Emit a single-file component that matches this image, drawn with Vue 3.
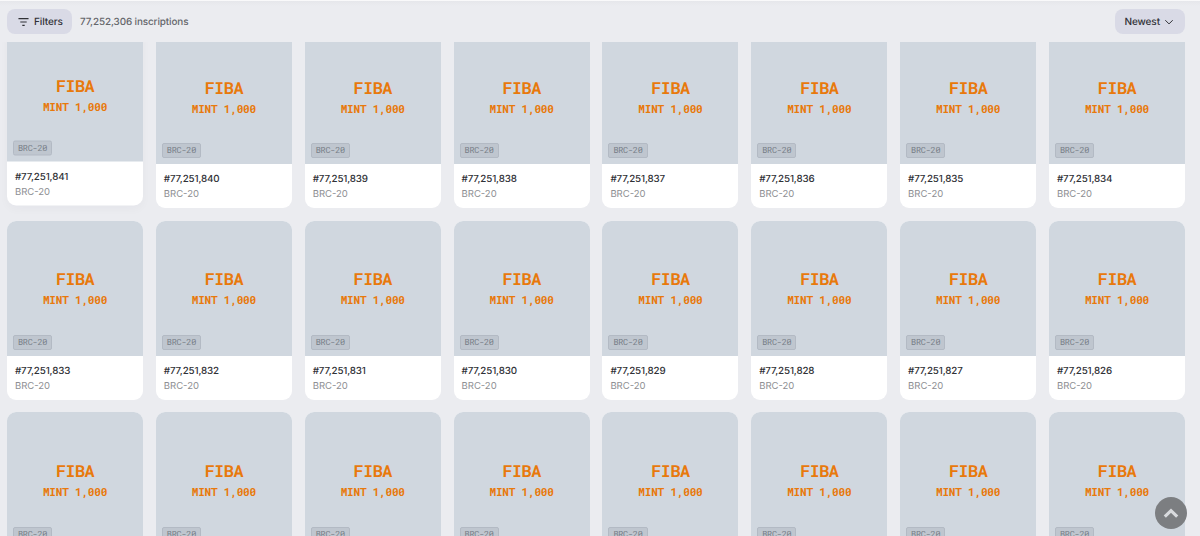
<template>
  <div class="page">
    <header class="toolbar">
      <div class="toolbar-left">
        <button class="filter-button">
          <svg class="filter-icon" viewBox="0 0 12 10" fill="none" stroke="currentColor" stroke-width="1.3">
            <path d="M0.5 1.4h11M2.5 5h7M4.7 8.6h2.6"></path>
          </svg>
          Filters
        </button>
        <span class="total">77,252,306 inscriptions</span>
      </div>
      <button class="sort-button">
        Newest
        <svg class="sort-icon" viewBox="0 0 10 10" fill="none" stroke="currentColor" stroke-width="1">
          <path d="M1.3 3.2L5 6.9L8.7 3.2"></path>
        </svg>
      </button>
    </header>

    <main class="results">
      <div class="card-grid">
        <article
          v-for="card in inscriptions"
          :key="card.number"
          class="card"
          :class="{ raised: card.raised }"
        >
          <div class="preview">
            <span class="ticker">FIBA</span>
            <span class="operation">MINT 1,000</span>
            <span class="badge">BRC-20</span>
          </div>
          <div class="card-info">
            <h3 class="card-number">#{{ card.number.toLocaleString('en-US') }}</h3>
            <p class="card-type">BRC-20</p>
          </div>
        </article>
      </div>
    </main>

    <button class="scroll-top" aria-label="Back to top" @click="scrollToTop">
      <svg width="16" height="12" viewBox="0 0 16 12" fill="none" stroke="currentColor" stroke-width="3.2">
        <path d="M1.8 9.6L8 3.7L14.2 9.6"></path>
      </svg>
    </button>
  </div>
</template>

<script setup>
import { ref } from 'vue'

const latest = 77251841

const inscriptions = ref(
  Array.from({ length: 24 }, (_, index) => ({
    number: latest - index,
    raised: index === 0
  }))
)

const scrollToTop = () => {
  window.scrollTo({ top: 0, behavior: 'smooth' })
}
</script>

<style>
body {
  margin: 0;
  background: #ebecf0;
}
</style>

<style scoped>
.page {
  position: relative;
  height: 536px;
  overflow: hidden;
  display: flex;
  flex-direction: column;
  background: #ebecf0;
  font-family: Inter, "Liberation Sans", sans-serif;
  text-rendering: geometricPrecision;
  color: #303136;
}

button {
  border: none;
  padding: 0;
  font-family: inherit;
  text-rendering: inherit;
  color: inherit;
  cursor: pointer;
}

.toolbar {
  flex: none;
  box-sizing: border-box;
  height: 42px;
  padding: 8px 15.5px 8px 7px;
  border-top: 1px solid #f9f9fa;
  display: flex;
  justify-content: space-between;
  align-items: center;
  background: linear-gradient(#e6e7eb, #ebecf0 5px);
}

.toolbar-left {
  display: flex;
  align-items: center;
  gap: 8px;
}

.filter-button,
.sort-button {
  height: 25px;
  border-radius: 8px;
  display: flex;
  align-items: center;
  background: #d9dae6;
  font-size: 10px;
  font-weight: 500;
  letter-spacing: -0.1px;
}

.filter-button {
  width: 65px;
  padding-left: 11px;
  gap: 5px;
}

.filter-icon {
  width: 11px;
  height: 10px;
}

.sort-button {
  width: 70px;
  padding-left: 10px;
  gap: 4px;
}

.sort-icon {
  width: 10px;
  height: 10px;
}

.total {
  padding-top: 1px;
  font-size: 9.9px;
  line-height: 14px;
  letter-spacing: -0.1px;
  font-weight: 500;
  color: #65666b;
}

.results {
  flex: 1;
  min-height: 0;
  overflow: hidden;
}

.card-grid {
  margin-top: -13.3px;
  padding: 0 15px 0 7px;
  display: grid;
  grid-template-columns: repeat(8, 1fr);
  gap: 12.8px;
}

.card {
  height: 179.1px;
  border-radius: 9px;
  overflow: hidden;
  background: #ffffff;
}

.card.raised {
  transform: translateY(-2.5px);
  box-shadow: 0 3px 10px rgba(30, 35, 60, 0.03);
}

.preview {
  position: relative;
  height: 135.6px;
  display: flex;
  flex-direction: column;
  align-items: center;
  justify-content: center;
  background: #d0d7df;
  color: #e8790c;
  font-family: "Roboto Mono", "DejaVu Sans Mono", monospace;
  font-weight: 700;
}

.ticker {
  margin-top: 5px;
  font-size: 16.6px;
  line-height: 20px;
  letter-spacing: -0.4px;
}

.operation {
  font-size: 11.2px;
  line-height: 21px;
  letter-spacing: -0.3px;
}

.badge {
  position: absolute;
  left: 6px;
  bottom: 6px;
  box-sizing: border-box;
  height: 15px;
  padding: 0 4px;
  border: 1px solid #b3bac4;
  border-radius: 2px;
  background: #bfc6cf;
  color: #777e87;
  font-size: 8.5px;
  line-height: 13px;
  letter-spacing: -0.24px;
  font-weight: 400;
}

.card-info {
  padding: 9px 8px 7px;
}

.card-number {
  margin: 0;
  font-size: 9.8px;
  line-height: 14px;
  letter-spacing: -0.14px;
  font-weight: 500;
}

.card-type {
  margin: 0;
  font-size: 9.5px;
  line-height: 15px;
  color: #8e8f93;
}

.scroll-top {
  position: absolute;
  right: 13px;
  bottom: 7px;
  width: 32px;
  height: 32px;
  border-radius: 50%;
  display: flex;
  align-items: center;
  justify-content: center;
  background: #7c7e81;
  color: #d8dadd;
}
</style>
